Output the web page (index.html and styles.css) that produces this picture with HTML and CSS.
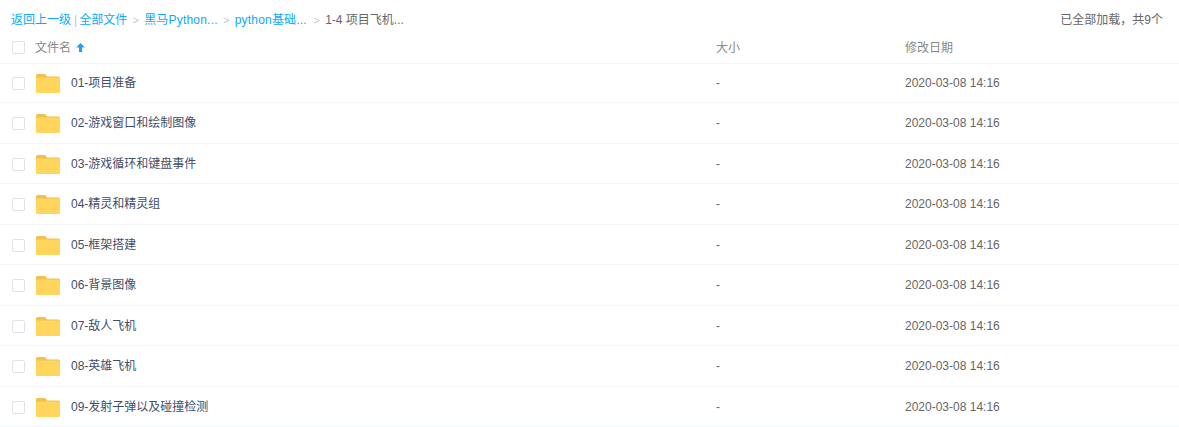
FILE: index.html
```html
<!DOCTYPE html>
<html lang="zh">
<head>
<meta charset="utf-8">
<title>文件列表</title>
<link rel="stylesheet" href="styles.css">
</head>
<body>
<svg class="defs" width="0" height="0" aria-hidden="true"><defs>
<symbol id="folder" viewBox="0 0 24 19"><path d="M0 1.500A1.500 1.500 0 0 1 1.500 0h7a1.500 1.500 0 0 1 1.200.6L11 2.500h11.500A1.500 1.500 0 0 1 24 4v2H0z" fill="#f0c14f"/><path d="M0 3.500h22.500A1.500 1.500 0 0 1 24 5v12.500a1.500 1.500 0 0 1-1.500 1.500h-21A1.500 1.500 0 0 1 0 17.500z" fill="#ffd55c"/></symbol>
</defs></svg>
<div class="top">
  <div class="crumbs"><a>返回上一级</a><span class="pipe">|</span><a>全部文件</a><span class="gt">&gt;</span><a class="clip">黑马Python...</a><span class="gt">&gt;</span><a class="clip">python基础...</a><span class="gt">&gt;</span><span class="cur">1-4 项目飞机...</span></div>
  <div class="count">已全部加载，共9个</div>
</div>
<div class="row head">
  <span class="check"></span>
  <span class="name headname">文件名<svg class="arrow" width="9" height="9" viewBox="0 0 9 9"><path d="M4.500 0 8.800 4.600H6V9H3V4.600H.2z" fill="#1e9ff2"/></svg></span>
  <span class="size">大小</span>
  <span class="date">修改日期</span>
</div>
<div class="row"><span class="check"></span><svg class="icon"><use href="#folder"/></svg><span class="name">01-项目准备</span><span class="size">-</span><span class="date">2020-03-08 14:16</span></div>
<div class="row"><span class="check"></span><svg class="icon"><use href="#folder"/></svg><span class="name">02-游戏窗口和绘制图像</span><span class="size">-</span><span class="date">2020-03-08 14:16</span></div>
<div class="row"><span class="check"></span><svg class="icon"><use href="#folder"/></svg><span class="name">03-游戏循环和键盘事件</span><span class="size">-</span><span class="date">2020-03-08 14:16</span></div>
<div class="row"><span class="check"></span><svg class="icon"><use href="#folder"/></svg><span class="name">04-精灵和精灵组</span><span class="size">-</span><span class="date">2020-03-08 14:16</span></div>
<div class="row"><span class="check"></span><svg class="icon"><use href="#folder"/></svg><span class="name">05-框架搭建</span><span class="size">-</span><span class="date">2020-03-08 14:16</span></div>
<div class="row"><span class="check"></span><svg class="icon"><use href="#folder"/></svg><span class="name">06-背景图像</span><span class="size">-</span><span class="date">2020-03-08 14:16</span></div>
<div class="row"><span class="check"></span><svg class="icon"><use href="#folder"/></svg><span class="name">07-敌人飞机</span><span class="size">-</span><span class="date">2020-03-08 14:16</span></div>
<div class="row"><span class="check"></span><svg class="icon"><use href="#folder"/></svg><span class="name">08-英雄飞机</span><span class="size">-</span><span class="date">2020-03-08 14:16</span></div>
<div class="row"><span class="check"></span><svg class="icon"><use href="#folder"/></svg><span class="name">09-发射子弹以及碰撞检测</span><span class="size">-</span><span class="date">2020-03-08 14:16</span></div>
</body>
</html>
```
FILE: styles.css
```css
* { box-sizing: border-box; }
html, body { margin: 0; padding: 0; background: #fff; }
body { width: 1179px; height: 427px; overflow: hidden; font: 12px/1 "Liberation Sans", "Noto Sans CJK SC", sans-serif; color: #666; }
.defs { position: absolute; }
.top { display: flex; justify-content: space-between; align-items: center; height: 40px; padding: 0 16px 0 11px; }
.crumbs { display: flex; align-items: center; }
.crumbs a { color: #09aaff; }
.crumbs .clip { width: 73.5px; white-space: nowrap; letter-spacing: .2px; }
.pipe { color: #b8c4d0; margin: 0 2px 0 3px; }
.gt { width: 17px; text-align: center; color: #c0c8d0; font-size: 11px; }
.cur { color: #666; }
.count { color: #666; }
.row { display: flex; align-items: center; height: 40.5px; padding: 1.5px 0 0 12px; border-bottom: 1px solid #f2f6fb; }
.head + .row { height: 39px; }
.head { height: 24px; padding: 0 0 8px 12px; }
.check { width: 13px; height: 13px; flex: none; border: 1px solid #dfe2e8; border-radius: 2px; margin-right: 11px; background: #fff; }
.head .check { margin-right: 10px; }
.icon { width: 24px; height: 19px; flex: none; margin-right: 11px; }
.name { width: 645px; flex: none; color: #424e67; margin-bottom: 1px; }
.headname { color: #888; width: 681px; display: flex; align-items: center; margin-bottom: 0; }
.arrow { margin-left: 5px; }
.size { width: 189px; flex: none; color: #666; margin-bottom: 1px; }
.date { color: #666; margin-bottom: 1px; }
.head .size, .head .date { color: #888; margin-bottom: 0; }
```
